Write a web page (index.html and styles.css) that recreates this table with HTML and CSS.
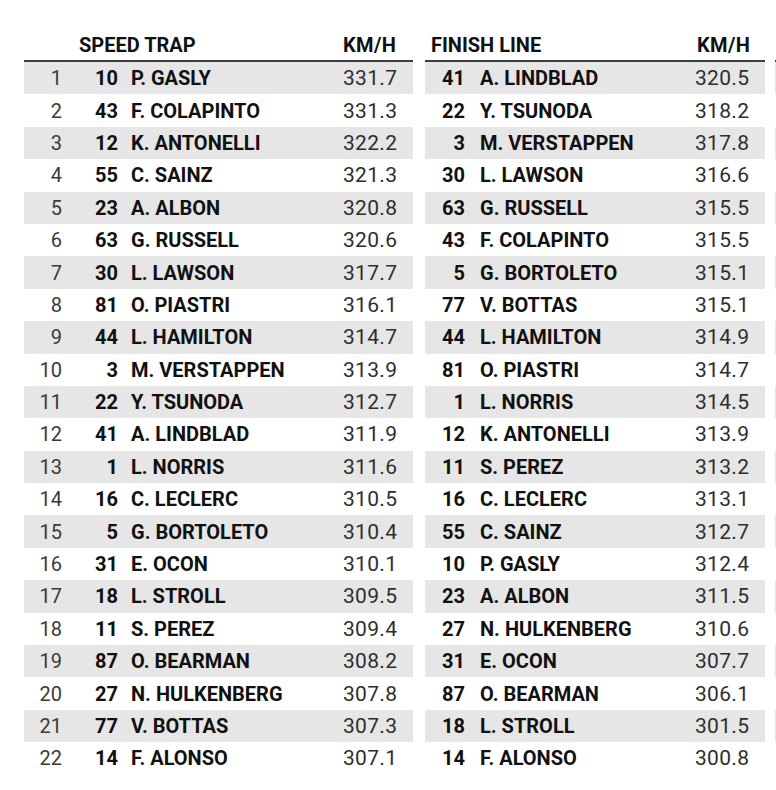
FILE: index.html
```html
<!DOCTYPE html>
<html>
<head>
<meta charset="utf-8">
<link rel="stylesheet" href="styles.css">
</head>
<body>
<div class="page">
  <section class="table table-left">
    <div class="head"><span class="pos"></span><span class="title">SPEED TRAP</span><span class="val">KM/H</span></div>
    <div class="row"><span class="pos">1</span><span class="num">10</span><span class="name">P. GASLY</span><span class="val">331.7</span></div>
    <div class="row"><span class="pos">2</span><span class="num">43</span><span class="name">F. COLAPINTO</span><span class="val">331.3</span></div>
    <div class="row"><span class="pos">3</span><span class="num">12</span><span class="name">K. ANTONELLI</span><span class="val">322.2</span></div>
    <div class="row"><span class="pos">4</span><span class="num">55</span><span class="name">C. SAINZ</span><span class="val">321.3</span></div>
    <div class="row"><span class="pos">5</span><span class="num">23</span><span class="name">A. ALBON</span><span class="val">320.8</span></div>
    <div class="row"><span class="pos">6</span><span class="num">63</span><span class="name">G. RUSSELL</span><span class="val">320.6</span></div>
    <div class="row"><span class="pos">7</span><span class="num">30</span><span class="name">L. LAWSON</span><span class="val">317.7</span></div>
    <div class="row"><span class="pos">8</span><span class="num">81</span><span class="name">O. PIASTRI</span><span class="val">316.1</span></div>
    <div class="row"><span class="pos">9</span><span class="num">44</span><span class="name">L. HAMILTON</span><span class="val">314.7</span></div>
    <div class="row"><span class="pos">10</span><span class="num">3</span><span class="name">M. VERSTAPPEN</span><span class="val">313.9</span></div>
    <div class="row"><span class="pos">11</span><span class="num">22</span><span class="name">Y. TSUNODA</span><span class="val">312.7</span></div>
    <div class="row"><span class="pos">12</span><span class="num">41</span><span class="name">A. LINDBLAD</span><span class="val">311.9</span></div>
    <div class="row"><span class="pos">13</span><span class="num">1</span><span class="name">L. NORRIS</span><span class="val">311.6</span></div>
    <div class="row"><span class="pos">14</span><span class="num">16</span><span class="name">C. LECLERC</span><span class="val">310.5</span></div>
    <div class="row"><span class="pos">15</span><span class="num">5</span><span class="name">G. BORTOLETO</span><span class="val">310.4</span></div>
    <div class="row"><span class="pos">16</span><span class="num">31</span><span class="name">E. OCON</span><span class="val">310.1</span></div>
    <div class="row"><span class="pos">17</span><span class="num">18</span><span class="name">L. STROLL</span><span class="val">309.5</span></div>
    <div class="row"><span class="pos">18</span><span class="num">11</span><span class="name">S. PEREZ</span><span class="val">309.4</span></div>
    <div class="row"><span class="pos">19</span><span class="num">87</span><span class="name">O. BEARMAN</span><span class="val">308.2</span></div>
    <div class="row"><span class="pos">20</span><span class="num">27</span><span class="name">N. HULKENBERG</span><span class="val">307.8</span></div>
    <div class="row"><span class="pos">21</span><span class="num">77</span><span class="name">V. BOTTAS</span><span class="val">307.3</span></div>
    <div class="row"><span class="pos">22</span><span class="num">14</span><span class="name">F. ALONSO</span><span class="val">307.1</span></div>
  </section>
  <section class="table table-right">
    <div class="head"><span class="title">FINISH LINE</span><span class="val">KM/H</span></div>
    <div class="row"><span class="num">41</span><span class="name">A. LINDBLAD</span><span class="val">320.5</span></div>
    <div class="row"><span class="num">22</span><span class="name">Y. TSUNODA</span><span class="val">318.2</span></div>
    <div class="row"><span class="num">3</span><span class="name">M. VERSTAPPEN</span><span class="val">317.8</span></div>
    <div class="row"><span class="num">30</span><span class="name">L. LAWSON</span><span class="val">316.6</span></div>
    <div class="row"><span class="num">63</span><span class="name">G. RUSSELL</span><span class="val">315.5</span></div>
    <div class="row"><span class="num">43</span><span class="name">F. COLAPINTO</span><span class="val">315.5</span></div>
    <div class="row"><span class="num">5</span><span class="name">G. BORTOLETO</span><span class="val">315.1</span></div>
    <div class="row"><span class="num">77</span><span class="name">V. BOTTAS</span><span class="val">315.1</span></div>
    <div class="row"><span class="num">44</span><span class="name">L. HAMILTON</span><span class="val">314.9</span></div>
    <div class="row"><span class="num">81</span><span class="name">O. PIASTRI</span><span class="val">314.7</span></div>
    <div class="row"><span class="num">1</span><span class="name">L. NORRIS</span><span class="val">314.5</span></div>
    <div class="row"><span class="num">12</span><span class="name">K. ANTONELLI</span><span class="val">313.9</span></div>
    <div class="row"><span class="num">11</span><span class="name">S. PEREZ</span><span class="val">313.2</span></div>
    <div class="row"><span class="num">16</span><span class="name">C. LECLERC</span><span class="val">313.1</span></div>
    <div class="row"><span class="num">55</span><span class="name">C. SAINZ</span><span class="val">312.7</span></div>
    <div class="row"><span class="num">10</span><span class="name">P. GASLY</span><span class="val">312.4</span></div>
    <div class="row"><span class="num">23</span><span class="name">A. ALBON</span><span class="val">311.5</span></div>
    <div class="row"><span class="num">27</span><span class="name">N. HULKENBERG</span><span class="val">310.6</span></div>
    <div class="row"><span class="num">31</span><span class="name">E. OCON</span><span class="val">307.7</span></div>
    <div class="row"><span class="num">87</span><span class="name">O. BEARMAN</span><span class="val">306.1</span></div>
    <div class="row"><span class="num">18</span><span class="name">L. STROLL</span><span class="val">301.5</span></div>
    <div class="row"><span class="num">14</span><span class="name">F. ALONSO</span><span class="val">300.8</span></div>
  </section>
  <section class="table table-edge">
    <div class="head"></div>
    <div class="row"></div><div class="row"></div><div class="row"></div><div class="row"></div>
    <div class="row"></div><div class="row"></div><div class="row"></div><div class="row"></div>
    <div class="row"></div><div class="row"></div><div class="row"></div><div class="row"></div>
    <div class="row"></div><div class="row"></div><div class="row"></div><div class="row"></div>
    <div class="row"></div><div class="row"></div><div class="row"></div><div class="row"></div>
    <div class="row"></div><div class="row"></div>
  </section>
</div>
</body>
</html>
```

FILE: styles.css
```css
html, body {
  margin: 0;
  padding: 0;
  background: #ffffff;
}
body {
  font-family: Roboto, "Liberation Sans", sans-serif;
  color: #151515;
  width: 776px;
  height: 790px;
  overflow: hidden;
}
.page {
  display: flex;
  align-items: flex-start;
  width: 776px;
  box-sizing: border-box;
  padding: 30px 0 0 24px;
  gap: 12px;
}
.table {
  flex: none;
}
.table-left { width: 389px; }
.table-right { width: 340px; }
.table-edge { flex: 1; min-width: 0; margin-left: -2px; }

.head {
  display: flex;
  align-items: center;
  height: 30px;
  border-bottom: 2px solid #3d3d3d;
  font-weight: 700;
  font-size: 20px;
  color: #111;
}
.row {
  display: flex;
  align-items: center;
  height: 32.4px;
  font-size: 20px;
}
.row:nth-of-type(even) {
  background: #e6e6e6;
}
.pos {
  width: 38px;
  text-align: right;
  color: #3a3a3a;
  flex: none;
}
.num {
  flex: none;
  width: 56px;
  text-align: right;
  font-weight: 700;
  color: #111;
}
.table-right .num { width: 40px; }
.name {
  flex: 1;
  margin-left: 13px;
  font-weight: 700;
  color: #111;
  white-space: nowrap;
}
.table-right .name { margin-left: 15px; }
.val {
  flex: none;
  width: 70px;
  color: #2e2e2e;
  font-size: 21px;
  letter-spacing: 0.3px;
}
.head .val { font-weight: 700; color: #111; font-size: 20px; letter-spacing: 0.4px; }
.table-right .head .val { width: 68px; }
.title {
  flex: 1;
}
.table-left .head .pos { width: 55px; }
.table-right .head .title { margin-left: 6px; }
```
